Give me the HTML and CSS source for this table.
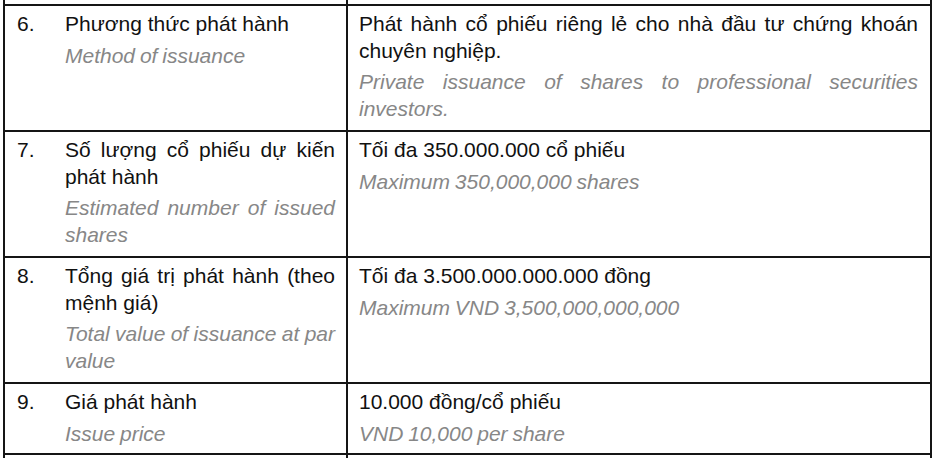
FILE: index.html
```html
<!DOCTYPE html>
<html lang="vi">
<head>
<meta charset="utf-8">
<title>Bảng phát hành</title>
<link rel="stylesheet" href="styles.css">
</head>
<body>
<div class="table">
  <div class="row stub"><div class="c1"></div><div class="c2"></div></div>
  <div class="row">
    <div class="c1">
      <div class="num">6.</div>
      <div class="label">
        <p class="vi">Phương thức phát hành</p>
        <p class="en">Method of issuance</p>
      </div>
    </div>
    <div class="c2">
      <p class="vi">Phát hành cổ phiếu riêng lẻ cho nhà đầu tư chứng khoán chuyên nghiệp.</p>
      <p class="en">Private issuance of shares to professional securities investors.</p>
    </div>
  </div>
  <div class="row">
    <div class="c1">
      <div class="num">7.</div>
      <div class="label">
        <p class="vi">Số lượng cổ phiếu dự kiến phát hành</p>
        <p class="en">Estimated number of issued shares</p>
      </div>
    </div>
    <div class="c2">
      <p class="vi">Tối đa 350.000.000 cổ phiếu</p>
      <p class="en">Maximum 350,000,000 shares</p>
    </div>
  </div>
  <div class="row">
    <div class="c1">
      <div class="num">8.</div>
      <div class="label">
        <p class="vi">Tổng giá trị phát hành (theo mệnh giá)</p>
        <p class="en">Total value of issuance at par value</p>
      </div>
    </div>
    <div class="c2">
      <p class="vi">Tối đa 3.500.000.000.000 đồng</p>
      <p class="en">Maximum VND 3,500,000,000,000</p>
    </div>
  </div>
  <div class="row short">
    <div class="c1">
      <div class="num">9.</div>
      <div class="label">
        <p class="vi">Giá phát hành</p>
        <p class="en">Issue price</p>
      </div>
    </div>
    <div class="c2">
      <p class="vi">10.000 đồng/cổ phiếu</p>
      <p class="en">VND 10,000 per share</p>
    </div>
  </div>
  <div class="row stub bottom"><div class="c1"></div><div class="c2"></div></div>
</div>
</body>
</html>
```

FILE: styles.css
```css
html, body {
  margin: 0;
  padding: 0;
  background: #ffffff;
}

body {
  font-family: "Liberation Sans", Arial, sans-serif;
  font-size: 21px;
  line-height: 26.5px;
  color: #111111;
  overflow: hidden;
  height: 458px;
}

.table {
  margin-left: 3px;
  width: 929px;
}

.row {
  display: grid;
  grid-template-columns: 343px 586px;
  border-top: 2px solid #151515;
}

.row.stub {
  border-top: none;
  height: 4px;
}

.row.stub.bottom {
  border-top: 2px solid #151515;
  height: 12px;
}

.c1 {
  display: flex;
  border-left: 2px solid #151515;
  padding: 5px 10px 8px 12px;
}

.c2 {
  border-left: 2px solid #151515;
  border-right: 2px solid #151515;
  padding: 5px 12px 8px 11px;
}

.row.short .c1,
.row.short .c2 {
  padding-bottom: 6px;
}

.stub .c1,
.stub .c2 {
  padding: 0;
}

.num {
  width: 48px;
  flex: none;
}

.label {
  flex: 1;
  margin-right: 1px;
}

p {
  margin: 0;
  text-align: justify;
}

p.en {
  margin-top: 5px;
  font-style: italic;
  color: #878787;
  word-spacing: -1px;
}
```
